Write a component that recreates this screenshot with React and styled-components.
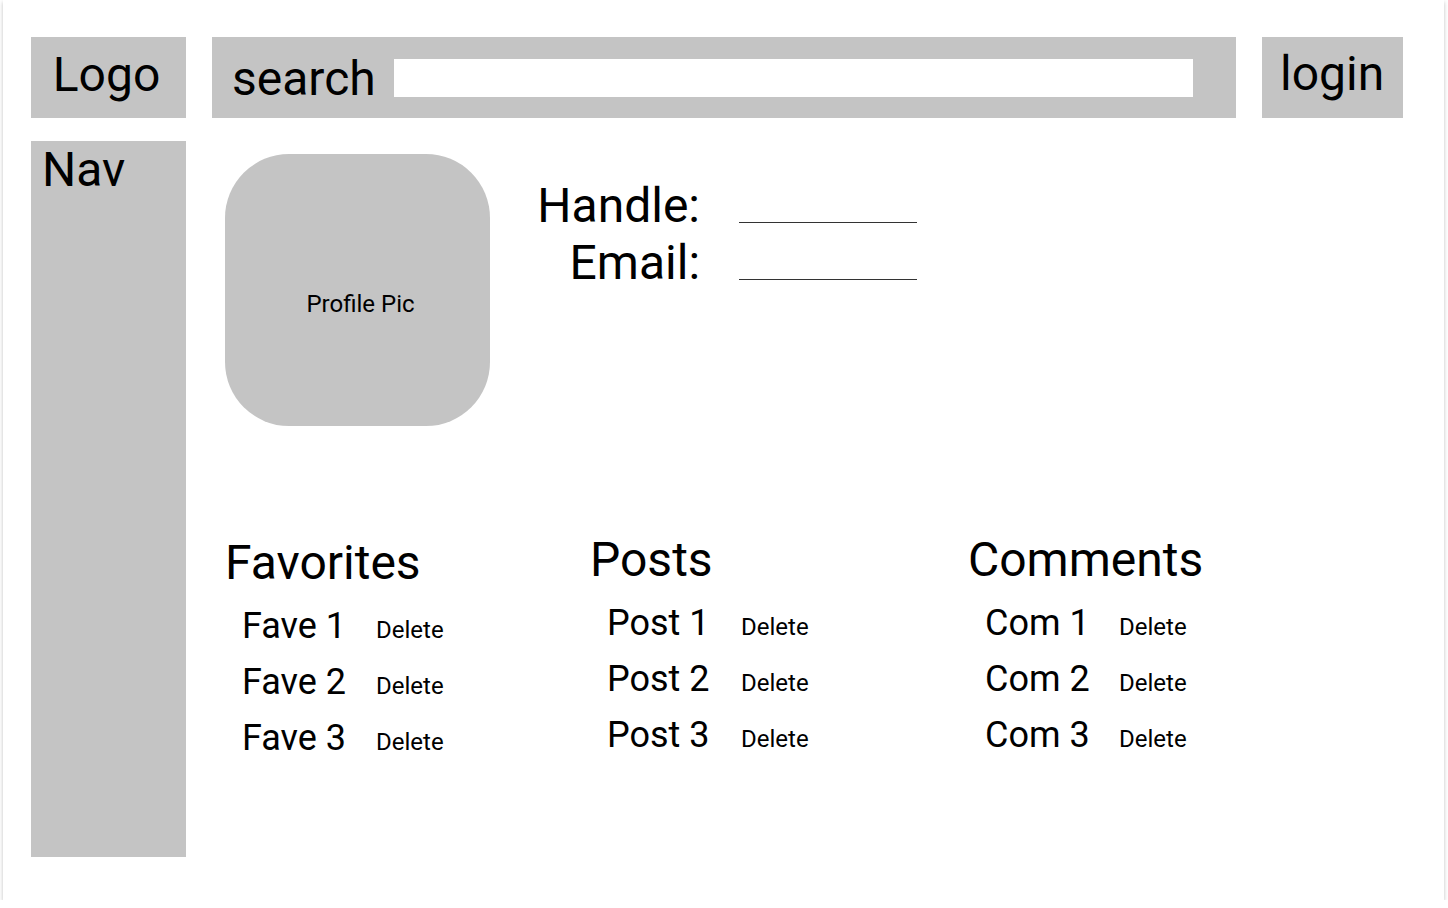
import React from "react";
import styled, { createGlobalStyle } from "styled-components";

const GREY = "#c4c4c4";

const lists = [
  { title: "Favorites", items: ["Fave 1", "Fave 2", "Fave 3"], drop: 3 },
  { title: "Posts", items: ["Post 1", "Post 2", "Post 3"], drop: 0 },
  { title: "Comments", items: ["Com 1", "Com 2", "Com 3"], drop: 0 }
];

const GlobalStyle = createGlobalStyle`
  html, body {
    margin: 0;
    padding: 0;
    background: #fff;
  }

  body {
    font-family: Roboto, "Liberation Sans", sans-serif;
    color: #000;
  }
`;

class App extends React.Component {
  render() {
    return (
      <>
        <GlobalStyle />
        <Frame>
          <Header>
            <LogoBox>Logo</LogoBox>
            <SearchBar>
              <SearchLabel>search</SearchLabel>
              <SearchInput type="text" />
            </SearchBar>
            <LoginBox>login</LoginBox>
          </Header>

          <Body>
            <Nav>Nav</Nav>
            <Main>
              <ProfileRow>
                <ProfilePic>Profile Pic</ProfilePic>
                <Fields>
                  <FieldRow>
                    <FieldLabel>Handle:</FieldLabel>
                    <FieldLine />
                  </FieldRow>
                  <FieldRow>
                    <FieldLabel>Email:</FieldLabel>
                    <FieldLine />
                  </FieldRow>
                </Fields>
              </ProfileRow>

              <Lists>
                {lists.map(list => (
                  <ListCol key={list.title} $drop={list.drop}>
                    <ListTitle>{list.title}</ListTitle>
                    {list.items.map(item => (
                      <ListRow key={item}>
                        <ItemName>{item}</ItemName>
                        <DeleteBtn>Delete</DeleteBtn>
                      </ListRow>
                    ))}
                  </ListCol>
                ))}
              </Lists>
            </Main>
          </Body>
        </Frame>
      </>
    );
  }
}

const Frame = styled.div`
  width: 1441px;
  height: 900px;
  margin-left: 3px;
  box-sizing: border-box;
  padding: 37px 41px 0 28px;
  background: #fff;
  box-shadow: 0 2px 4px rgba(0, 0, 0, 0.25);
`;

const Header = styled.div`
  display: flex;
  gap: 26px;
  height: 81px;
  font-size: 48px;
`;

const LogoBox = styled.div`
  width: 155px;
  box-sizing: border-box;
  padding-top: 9px;
  padding-right: 4px;
  text-align: center;
  background: ${GREY};
`;

const SearchBar = styled.div`
  flex: 1;
  display: flex;
  align-items: center;
  padding: 2px 43px 0 20px;
  background: ${GREY};
`;

const SearchLabel = styled.span`
  margin-right: 18px;
`;

const SearchInput = styled.input`
  flex: 1;
  height: 38px;
  margin-top: -2px;
  border: none;
  outline: none;
  padding: 0;
  background: #fff;
`;

const LoginBox = styled.div`
  width: 141px;
  box-sizing: border-box;
  padding: 8px 0 0 18px;
  background: ${GREY};
`;

const Body = styled.div`
  display: flex;
  margin-top: 23px;
`;

const Nav = styled.div`
  width: 155px;
  height: 716px;
  box-sizing: border-box;
  padding-left: 11px;
  font-size: 48px;
  background: ${GREY};
`;

const Main = styled.div`
  flex: 1;
  padding: 13px 0 0 39px;
`;

const ProfileRow = styled.div`
  display: flex;
`;

const ProfilePic = styled.div`
  width: 265px;
  height: 272px;
  box-sizing: border-box;
  padding: 27px 0 0 6px;
  display: flex;
  align-items: center;
  justify-content: center;
  border-radius: 64px;
  background: ${GREY};
  font-size: 24px;
`;

const Fields = styled.div`
  margin-left: 44px;
  padding-top: 23px;
  font-size: 48px;
`;

const FieldRow = styled.div`
  display: flex;
`;

const FieldLabel = styled.div`
  width: 166px;
  text-align: right;
`;

const FieldLine = styled.div`
  width: 178px;
  height: 1px;
  margin: 45px 0 0 39px;
  background: #333;
`;

const Lists = styled.div`
  display: grid;
  grid-template-columns: 365px 378px 1fr;
  margin-top: 105px;
`;

const ListCol = styled.div`
  display: flex;
  flex-direction: column;
  margin-top: ${props => props.$drop}px;
`;

const ListTitle = styled.div`
  font-size: 48px;
  margin-bottom: 7px;
`;

const ListRow = styled.div`
  display: flex;
  align-items: baseline;
  height: 56px;
  line-height: 56px;
  padding-left: 17px;
`;

const ItemName = styled.span`
  width: 134px;
  font-size: 36px;
`;

const DeleteBtn = styled.span`
  font-size: 24px;
  cursor: pointer;
`;

export default App;
